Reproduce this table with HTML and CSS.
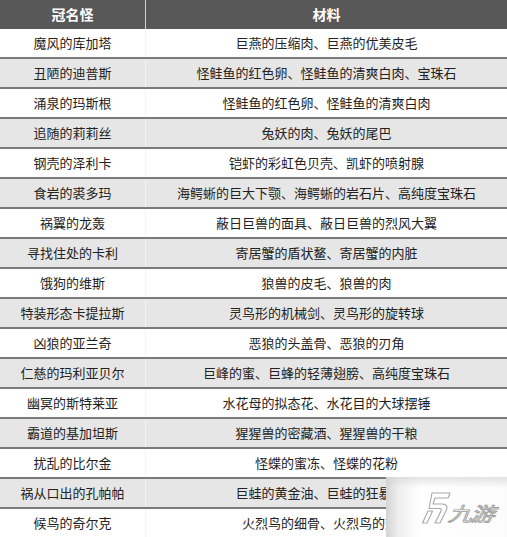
FILE: index.html
```html
<!DOCTYPE html>
<html lang="zh-CN">
<head>
<meta charset="utf-8">
<link rel="stylesheet" href="styles.css">
</head>
<body>
<div class="page">
<table class="tbl">
  <thead>
    <tr><th class="c1">冠名怪</th><th class="c2">材料</th></tr>
  </thead>
  <tbody>
    <tr><td class="c1">魔风的库加塔</td><td class="c2">巨燕的压缩肉、巨燕的优美皮毛</td></tr>
    <tr class="alt"><td class="c1">丑陋的迪普斯</td><td class="c2">怪鲑鱼的红色卵、怪鲑鱼的清爽白肉、宝珠石</td></tr>
    <tr><td class="c1">涌泉的玛斯根</td><td class="c2">怪鲑鱼的红色卵、怪鲑鱼的清爽白肉</td></tr>
    <tr class="alt"><td class="c1">追随的莉莉丝</td><td class="c2">兔妖的肉、兔妖的尾巴</td></tr>
    <tr><td class="c1">钢壳的泽利卡</td><td class="c2">铠虾的彩虹色贝壳、凯虾的喷射腺</td></tr>
    <tr class="alt"><td class="c1">食岩的裘多玛</td><td class="c2">海鳄蜥的巨大下颚、海鳄蜥的岩石片、高纯度宝珠石</td></tr>
    <tr><td class="c1">祸翼的龙轰</td><td class="c2">蔽日巨兽的面具、蔽日巨兽的烈风大翼</td></tr>
    <tr class="alt"><td class="c1">寻找住处的卡利</td><td class="c2">寄居蟹的盾状鳌、寄居蟹的内脏</td></tr>
    <tr><td class="c1">饿狗的维斯</td><td class="c2">狼兽的皮毛、狼兽的肉</td></tr>
    <tr class="alt"><td class="c1">特装形态卡提拉斯</td><td class="c2">灵鸟形的机械剑、灵鸟形的旋转球</td></tr>
    <tr><td class="c1">凶狼的亚兰奇</td><td class="c2">恶狼的头盖骨、恶狼的刃角</td></tr>
    <tr class="alt"><td class="c1">仁慈的玛利亚贝尔</td><td class="c2">巨峰的蜜、巨蜂的轻薄翅膀、高纯度宝珠石</td></tr>
    <tr><td class="c1">幽冥的斯特莱亚</td><td class="c2">水花母的拟态花、水花目的大球摆锤</td></tr>
    <tr class="alt"><td class="c1">霸道的基加坦斯</td><td class="c2">猩猩兽的密藏酒、猩猩兽的干粮</td></tr>
    <tr><td class="c1">扰乱的比尔金</td><td class="c2">怪蝶的蜜冻、怪蝶的花粉</td></tr>
    <tr class="alt"><td class="c1">祸从口出的孔帕帕</td><td class="c2">巨蛙的黄金油、巨蛙的狂暴之心</td></tr>
    <tr><td class="c1">候鸟的奇尔克</td><td class="c2">火烈鸟的细骨、火烈鸟的翅膀</td></tr>
  </tbody>
</table>
<div class="mark">
  <svg class="mark-logo" width="30" height="32" viewBox="0 0 30 32">
    <path d="M11 1 L29 1 L27 6 L14 6 L12 12 L21 12 C26 12 27 15 25 19 L19 31 L14 31 L20 19 C21 17 20 16.5 18 16.5 L8 16.5 Z" fill="#fff" stroke="#a8a8a8" stroke-width="1.1" stroke-linejoin="round"/>
    <path d="M7 19 L11.5 19 L6 31 L1.5 31 Z" fill="#fff" stroke="#a8a8a8" stroke-width="1.1" stroke-linejoin="round"/>
  </svg>
  <span class="mark-text">九游</span>
</div>
</div>
</body>
</html>
```
FILE: styles.css
```css
html, body {
  margin: 0;
  padding: 0;
  background: #fff;
}
.page {
  position: relative;
  width: 507px;
  height: 537px;
  overflow: hidden;
  font-family: "Noto Sans CJK SC", "Noto Sans", sans-serif;
}
.tbl {
  width: 507px;
  border-collapse: collapse;
  table-layout: fixed;
}
.tbl th {
  background: #585858;
  color: #fff;
  font-size: 14px;
  font-weight: bold;
  height: 29px;
  padding: 0;
  line-height: 29px;
  text-align: center;
}
.tbl th.c2 {
  border-left: 1px solid #d0d0d0;
}
.tbl td {
  height: 28px;
  padding: 0;
  font-size: 13px;
  line-height: 28px;
  color: #222;
  text-align: center;
  border-bottom: 2px solid #7a7a7a;
}
.tbl .c1 {
  width: 145px;
}
.tbl td.c2 {
  border-left: 1px solid #f4f4f4;
}
.tbl tr.alt td {
  background: #e6e6e6;
}
.mark {
  position: absolute;
  left: 386px;
  top: 477px;
  width: 121px;
  height: 60px;
  background:
    linear-gradient(180deg, rgba(210,210,210,0.6) 0%, rgba(255,255,255,0) 18%),
    linear-gradient(90deg, #d4d4d4 0%, #eeeeee 10%, #ffffff 28%, #fbfbfb 100%);
  display: flex;
  align-items: flex-start;
  padding-left: 35px;
  padding-top: 15px;
  box-sizing: border-box;
}
.mark-logo {
  flex: none;
}
.mark-text {
  display: inline-block;
  font-family: "Noto Sans CJK SC", sans-serif;
  font-size: 19px;
  line-height: 19px;
  font-weight: normal;
  color: #fff;
  -webkit-text-stroke: 0.9px #a0a0a0;
  transform: skewX(-22deg) scaleX(1.25);
  transform-origin: left top;
  letter-spacing: -1px;
  margin-top: 11px;
  margin-left: 4px;
}
```
